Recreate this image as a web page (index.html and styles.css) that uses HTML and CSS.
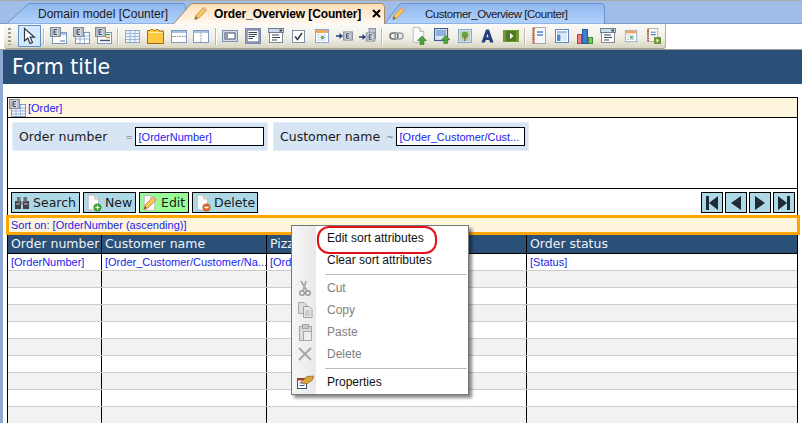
FILE: index.html
```html
<!DOCTYPE html>
<html lang="en">

<head>
  <meta charset="UTF-8">
  <title>Order_Overview [Counter]</title>
  <link rel="stylesheet" href="styles.css">
</head>

<body>
  <svg class="icon-defs" width="0" height="0">
    <defs>
      <symbol id="pencil" viewBox="0 0 16 16">
        <path d="M3 10 11.5 1.5 14.5 4.5 6 13 2 14.5Z" fill="#f6c65a" stroke="#b98a3c" stroke-width=".8"/>
        <path d="M11.5 1.5 14.5 4.5 13.2 5.8 10.2 2.8Z" fill="#e9a9a0"/>
        <path d="M2 14.5 3 11 5 13Z" fill="#6b5a45"/>
      </symbol>
      <symbol id="e-badge" viewBox="0 0 11 10">
        <rect x=".5" y=".5" width="10" height="9" fill="#b4bcc8" stroke="#858d9a"/>
        <rect x="3" y="1" width="5" height="8" fill="#d5dae2"/>
        <path d="M4 2.5H7M4 5H6.5M4 7.5H7M4 2.5V7.5" stroke="#3c4450" fill="none"/>
      </symbol>
      <symbol id="doc" viewBox="0 0 16 18">
        <path d="M2.5 .5H10L14.5 5V17.5H2.5Z" fill="#fbfbfb" stroke="#b5b5b5"/>
        <path d="M10 .5V5H14.5" fill="#e6e6e6" stroke="#b5b5b5"/>
      </symbol>
      <symbol id="up-arrow" viewBox="0 0 10 10">
        <path d="M5 1 9.5 5.5H7V9.5H3V5.5H.5Z" fill="#4ea33c" stroke="#2f7a26" stroke-width=".6"/>
      </symbol>
      <symbol id="notebook" viewBox="0 0 16 18">
        <rect x="2.5" y=".5" width="12" height="16" fill="#f6f6f4" stroke="#a9a9a9"/>
        <path d="M2.5 1V17" stroke="#b4552c" stroke-width="2.4" stroke-dasharray="1.4 .8"/>
        <path d="M6 5H12M6 8H12" stroke="#4f86d6" stroke-width="1.4"/>
      </symbol>
      <symbol id="calendar" viewBox="0 0 16 16">
        <rect x="1.5" y="1.5" width="13" height="13" fill="#fff" stroke="#8aa8d4"/>
        <rect x="2" y="2" width="12" height="3" fill="#f2a65a"/>
        <path d="M3.5 7H12.5M3.5 9.5H12.5M3.5 12H12.5" stroke="#9db6d8" stroke-dasharray="2 1"/>
        <rect x="7" y="8" width="3" height="3" fill="#63b35a"/>
      </symbol>
      <symbol id="dropdown" viewBox="0 0 16 16">
        <rect x="1.5" y="3.5" width="13" height="11" fill="#fff" stroke="#7f8790"/>
        <rect x=".5" y=".5" width="15" height="4" fill="#cdd9ea" stroke="#6f7f96"/>
        <rect x="11.5" y="1.5" width="2.5" height="2" fill="#39424e"/>
        <path d="M4 7H11M4 9.5H12M4 12H9" stroke="#3f4650" stroke-width="1.2"/>
      </symbol>
    </defs>
  </svg>

  <nav class="tab-strip">
    <div class="tab tab-domain">
      <svg class="tab-shape" width="180" height="21">
        <defs>
          <linearGradient id="tab-blue" x1="0" y1="0" x2="0" y2="1">
            <stop offset="0" stop-color="#8fb7f0"/>
            <stop offset="1" stop-color="#b3d3fb"/>
          </linearGradient>
        </defs>
        <path d="M.5 21 21 2Q22.5.5 24 .5H176Q179.5.5 179.5 4V21Z" fill="url(#tab-blue)" stroke="#6f93c8"/>
      </svg>
      <span class="tab-label">Domain model [Counter]</span>
    </div>
    <div class="tab tab-order">
      <svg class="tab-shape" width="212" height="21">
        <defs>
          <linearGradient id="tab-peach" x1="0" y1="0" x2="0" y2="1">
            <stop offset="0" stop-color="#ffdcb4"/>
            <stop offset="1" stop-color="#fff9f2"/>
          </linearGradient>
        </defs>
        <path d="M.5 21 17 2Q18.5.5 20 .5H208Q211.5.5 211.5 4V21" fill="url(#tab-peach)" stroke="#a98a62"/>
      </svg>
      <svg class="tab-pencil" width="15" height="15"><use href="#pencil"/></svg>
      <span class="tab-label">Order_Overview [Counter]</span>
      <svg class="tab-close" width="9" height="9" viewBox="0 0 9 9"><path d="M1 1 8 8M8 1 1 8" stroke="#000" stroke-width="2"/></svg>
    </div>
    <div class="tab tab-customer">
      <svg class="tab-shape" width="221" height="21">
        <path d="M.5 21 15 2Q16.5.5 18 .5H217Q220.5.5 220.5 4V21Z" fill="url(#tab-blue)" stroke="#6f93c8"/>
      </svg>
      <svg class="tab-pencil" width="15" height="15"><use href="#pencil"/></svg>
      <span class="tab-label">Customer_Overview [Counter]</span>
    </div>
  </nav>

  <div class="toolbar-row">
    <div class="toolbar">
      <span class="grip"></span>
      <span class="tool tool-active">
        <svg width="16" height="18" viewBox="0 0 16 18"><path d="M3.5 1.5V14L6.8 11 9 16.5 11.5 15.5 9.2 10.2H13.5Z" fill="#fff" stroke="#2f3a48" stroke-width="1.2"/></svg>
      </span>
      <span class="tool-sep"></span>

      <span class="tool"><svg width="17" height="18" viewBox="0 0 17 18"><rect x="2.5" y="5.5" width="14" height="11" fill="#fff" stroke="#7e99bf"/><rect x="3" y="6" width="13" height="2" fill="#a9c2e3"/><path d="M10 14H15" stroke="#8da0b8" stroke-width="1.5"/><use href="#e-badge" width="11" height="10"/></svg></span>
      <span class="tool"><svg width="17" height="18" viewBox="0 0 17 18"><rect x="2.5" y="5.5" width="14" height="11" fill="#fff" stroke="#7e99bf"/><path d="M3 9H16M3 12H16M7 6V16M11.5 6V16" stroke="#9db6d8"/><use href="#e-badge" width="11" height="10"/></svg></span>
      <span class="tool"><svg width="17" height="18" viewBox="0 0 17 18"><rect x="2.5" y="5.5" width="14" height="11" fill="#fff" stroke="#7e99bf"/><path d="M11 7.5H15" stroke="#4ea33c" stroke-width="1.5"/><path d="M11 10.5H15" stroke="#d98c2e" stroke-width="1.5"/><path d="M5 13.5H15" stroke="#46566c" stroke-width="1.5"/><use href="#e-badge" width="11" height="10"/></svg></span>
      <span class="tool-sep"></span>

      <span class="tool"><svg width="15" height="13" viewBox="0 0 15 13"><rect x=".5" y=".5" width="14" height="12" fill="#f0f5fc" stroke="#8aa8d4"/><path d="M1 3.5H14M1 6.5H14M1 9.5H14M5 1V12M10 1V12" stroke="#9db6d8"/></svg></span>
      <span class="tool"><svg width="17" height="15" viewBox="0 0 17 15"><path d="M.5 14.5V1.5H3L3.8.5H6L7 1.5H8L9 .5H11L12 2H16.5V14.5Z" fill="#fdc93f" stroke="#9b6a14"/><path d="M1.5 3.5H15.5" stroke="#fff0b0"/></svg></span>
      <span class="tool"><svg width="16" height="13" viewBox="0 0 16 13"><rect x=".5" y=".5" width="15" height="12" fill="#fff" stroke="#7e99bf"/><rect x="1" y="1" width="14" height="2" fill="#a9c2e3"/><path d="M1 6.5H15" stroke="#8a8f96" stroke-dasharray="1.5 1"/></svg></span>
      <span class="tool"><svg width="16" height="13" viewBox="0 0 16 13"><rect x=".5" y=".5" width="15" height="12" fill="#fff" stroke="#7e99bf"/><rect x="1" y="1" width="14" height="2" fill="#a9c2e3"/><path d="M8 3V12" stroke="#8a8f96" stroke-dasharray="1.5 1"/></svg></span>
      <span class="tool-sep"></span>

      <span class="tool"><svg width="16" height="12" viewBox="0 0 16 12"><rect x=".5" y=".5" width="15" height="11" fill="#d5dcea" stroke="#7e8fa8"/><rect x="3" y="3" width="10" height="6" fill="#fff" stroke="#3e4c66"/><path d="M5 4V8" stroke="#28303c"/></svg></span>
      <span class="tool"><svg width="16" height="16" viewBox="0 0 16 16"><rect x=".5" y=".5" width="15" height="15" fill="#c9cfe8" stroke="#7b87ad"/><rect x="2" y="2" width="12" height="12" fill="#fff" stroke="#4f5a78"/><path d="M3.5 4.5H12M3.5 6.5H12M3.5 8.5H10M3.5 10.5H8" stroke="#39424e" stroke-width="1.1"/></svg></span>
      <span class="tool"><svg width="16" height="16"><use href="#dropdown"/></svg></span>
      <span class="tool"><svg width="13" height="13" viewBox="0 0 13 13"><rect x=".5" y=".5" width="12" height="12" fill="#fff" stroke="#7f8fa8" stroke-width="1"/><path d="M3 6.5 5.5 9.5 10 3" stroke="#2d3a4c" stroke-width="1.5" fill="none"/></svg></span>
      <span class="tool"><svg width="16" height="16"><use href="#calendar"/></svg></span>
      <span class="tool"><svg width="17" height="14" viewBox="0 0 17 14"><path d="M0 7H4" stroke="#263a78" stroke-width="1.5"/><path d="M3.5 4 7 7 3.5 10Z" fill="#263a78"/><use href="#e-badge" x="7" y="1" width="10" height="12"/></svg></span>
      <span class="tool"><svg width="17" height="16" viewBox="0 0 17 16"><path d="M0 9H4" stroke="#263a78" stroke-width="1.5"/><path d="M3.5 6 7 9 3.5 12Z" fill="#263a78"/><rect x="10" y=".5" width="6.5" height="10" fill="#bcc6d4" stroke="#8b93a0"/><use href="#e-badge" x="6.5" y="3" width="10" height="12"/></svg></span>
      <span class="tool-sep"></span>

      <span class="tool"><svg width="15" height="8" viewBox="0 0 15 8"><rect x="1" y="1" width="8" height="6" rx="3" fill="none" stroke="#6d7278" stroke-width="1.6"/><rect x="6" y="1" width="8" height="6" rx="3" fill="none" stroke="#9a9fa5" stroke-width="1.6"/></svg></span>
      <span class="tool"><svg width="16" height="18" viewBox="0 0 16 18"><use href="#doc" width="14" height="16"/><use href="#up-arrow" x="6" y="8" width="10" height="10"/></svg></span>
      <span class="tool"><svg width="16" height="16" viewBox="0 0 16 16"><rect x=".5" y=".5" width="13" height="12" fill="#dbe7f6" stroke="#3d5f96" stroke-width="1.2"/><rect x="2" y="2" width="10" height="6" fill="#8fb0d8"/><use href="#up-arrow" x="7" y="6.5" width="9.5" height="9.5"/></svg></span>
      <span class="tool"><svg width="14" height="14" viewBox="0 0 14 14"><rect x=".5" y=".5" width="13" height="13" fill="#cfe0f2" stroke="#8aa8d4"/><rect x="2" y="2" width="10" height="10" fill="#b9d6a8"/><circle cx="7" cy="6" r="3.2" fill="#6f9e3e"/><path d="M7 8V12" stroke="#8a6a3a" stroke-width="1.4"/></svg></span>
      <span class="tool"><svg width="13" height="14" viewBox="0 0 13 14"><path d="M.5 13.5 5 .5H8L12.5 13.5H9L8.3 11H4.7L4 13.5ZM5.5 8.2H7.5L6.5 4.5Z" fill="#263f7c"/></svg></span>
      <span class="tool"><svg width="16" height="12" viewBox="0 0 16 12"><rect width="16" height="12" fill="#6f9a35"/><rect x="3" y="1" width="10" height="10" fill="#4f7a22"/><path d="M7 3 10.5 6 7 9Z" fill="#fff"/></svg></span>
      <span class="tool-sep"></span>

      <span class="tool"><svg width="16" height="18"><use href="#notebook"/></svg></span>
      <span class="tool"><svg width="14" height="14" viewBox="0 0 14 14"><rect x=".5" y=".5" width="13" height="13" fill="#fff" stroke="#5a86c4"/><rect x="2" y="2" width="10" height="2.5" fill="#a9c2e3"/><rect x="2" y="5.5" width="3.5" height="6.5" fill="#4f86d6"/><rect x="6.5" y="5.5" width="5.5" height="6.5" fill="#dce7f5"/></svg></span>
      <span class="tool"><svg width="16" height="15" viewBox="0 0 16 15"><rect x=".5" y="5.5" width="4" height="9" fill="#f2798a" stroke="#c0394e"/><rect x="5.5" y=".5" width="5" height="14" fill="#3d7fd0" stroke="#23589c"/><rect x="11.5" y="8.5" width="4" height="6" fill="#7cc267" stroke="#468f35"/></svg></span>
      <span class="tool"><svg width="16" height="16"><use href="#dropdown"/></svg></span>
      <span class="tool"><svg width="14" height="14"><use href="#calendar" width="14" height="14"/></svg></span>
      <span class="tool"><svg width="15" height="16" viewBox="0 0 15 16"><use href="#notebook" width="13" height="15"/><rect x="8" y="9" width="7" height="7" fill="#6f9a35"/><path d="M10.5 10.5 13 12.5 10.5 14.5Z" fill="#fff"/></svg></span>
    </div>
  </div>

  <main class="workspace">
    <h1 class="form-title">Form title</h1>

    <section class="form-frame">
      <div class="view-head">
        <svg width="17" height="18" viewBox="0 0 17 18"><rect x="2.5" y="5.5" width="14" height="12" fill="#f0f5fc" stroke="#7e99bf"/><path d="M3 9H16M3 12H16M3 15H16M7 6V17M11.5 6V17" stroke="#9db6d8"/><use href="#e-badge" width="11" height="10"/></svg>
        <span class="attr">[Order]</span>
      </div>

      <div class="search-fields">
        <div class="field-group">
          <span class="field-label">Order number</span>
          <span class="field-op">=</span>
          <span class="field-input attr">[OrderNumber]</span>
        </div>
        <div class="field-group">
          <span class="field-label">Customer name</span>
          <span class="field-op">~</span>
          <span class="field-input attr">[Order_Customer/Cust...</span>
        </div>
      </div>

      <div class="control-bar">
        <button class="btn btn-search">
          <svg width="16" height="15" viewBox="0 0 16 15"><rect x="1" y="6" width="6" height="8" fill="#3d4349"/><rect x="9" y="6" width="6" height="8" fill="#3d4349"/><rect x="3" y="2" width="3.5" height="5" fill="#6c737a"/><rect x="9.5" y="2" width="3.5" height="5" fill="#6c737a"/><rect x="7" y="6" width="2" height="4" fill="#9aa0a6"/><path d="M2 9H6M10 9H14" stroke="#c6cbd0"/></svg>
          Search
        </button>
        <button class="btn btn-new">
          <svg width="16" height="18" viewBox="0 0 16 18"><use href="#doc" width="14" height="17"/><circle cx="11.5" cy="13.5" r="3.7" fill="#4ea33c" stroke="#2f7a26" stroke-width=".6"/><path d="M9.5 13.5H13.5M11.5 11.5V15.5" stroke="#fff"/></svg>
          New
        </button>
        <button class="btn btn-edit">
          <svg width="16" height="16"><use href="#doc" width="14" height="16"/><use href="#pencil"/></svg>
          Edit
        </button>
        <button class="btn btn-delete">
          <svg width="16" height="18" viewBox="0 0 16 18"><use href="#doc" width="14" height="17"/><circle cx="11.5" cy="13.5" r="3.7" fill="#e2702c" stroke="#b04a12" stroke-width=".6"/><path d="M9.5 13.5H13.5" stroke="#fff" stroke-width="1.4"/></svg>
          Delete
        </button>
        <div class="paging">
          <button class="btn-page"><svg width="14" height="16" viewBox="0 0 14 16"><path d="M1 1H4V15H1ZM13 1V15L4 8Z" fill="#1f2a36"/></svg></button>
          <button class="btn-page"><svg width="12" height="16" viewBox="0 0 12 16"><path d="M11 1V15L1 8Z" fill="#1f2a36"/></svg></button>
          <button class="btn-page"><svg width="12" height="16" viewBox="0 0 12 16"><path d="M1 1V15L11 8Z" fill="#1f2a36"/></svg></button>
          <button class="btn-page"><svg width="14" height="16" viewBox="0 0 14 16"><path d="M1 1V15L10 8ZM10 1H13V15H10Z" fill="#1f2a36"/></svg></button>
        </div>
      </div>

      <div class="sort-bar attr">Sort on: [OrderNumber (ascending)]</div>

      <div class="grid-row grid-head">
        <div class="cell">Order number</div>
        <div class="cell">Customer name</div>
        <div class="cell">Pizz</div>
        <div class="cell">Order status</div>
      </div>
      <div class="grid-row">
        <div class="cell attr">[OrderNumber]</div>
        <div class="cell attr">[Order_Customer/Customer/Na...</div>
        <div class="cell attr">[Ord</div>
        <div class="cell attr">[Status]</div>
      </div>
      <div class="grid-row"><div class="cell"></div><div class="cell"></div><div class="cell"></div><div class="cell"></div></div>
      <div class="grid-row"><div class="cell"></div><div class="cell"></div><div class="cell"></div><div class="cell"></div></div>
      <div class="grid-row"><div class="cell"></div><div class="cell"></div><div class="cell"></div><div class="cell"></div></div>
      <div class="grid-row"><div class="cell"></div><div class="cell"></div><div class="cell"></div><div class="cell"></div></div>
      <div class="grid-row"><div class="cell"></div><div class="cell"></div><div class="cell"></div><div class="cell"></div></div>
      <div class="grid-row"><div class="cell"></div><div class="cell"></div><div class="cell"></div><div class="cell"></div></div>
      <div class="grid-row"><div class="cell"></div><div class="cell"></div><div class="cell"></div><div class="cell"></div></div>
      <div class="grid-row"><div class="cell"></div><div class="cell"></div><div class="cell"></div><div class="cell"></div></div>
      <div class="grid-row"><div class="cell"></div><div class="cell"></div><div class="cell"></div><div class="cell"></div></div>
    </section>
  </main>

  <!-- context menu -->
  <ul class="context-menu">
    <li class="menu-item menu-marked"><span class="menu-icon"></span>Edit sort attributes</li>
    <li class="menu-item"><span class="menu-icon"></span>Clear sort attributes</li>
    <li class="menu-sep"></li>
    <li class="menu-item menu-disabled">
      <span class="menu-icon"><svg width="16" height="17" viewBox="0 0 16 17"><path d="M4 1 10 11M9 1 6 11" stroke="#a8a8a8" stroke-width="1.8"/><circle cx="5" cy="13" r="2.3" fill="none" stroke="#9a9a9a" stroke-width="1.5"/><circle cx="11" cy="13" r="2.3" fill="none" stroke="#9a9a9a" stroke-width="1.5"/></svg></span>Cut
    </li>
    <li class="menu-item menu-disabled">
      <span class="menu-icon"><svg width="16" height="16" viewBox="0 0 16 16"><path d="M1.5.5H7L9.5 3V11.5H1.5Z" fill="#dedede" stroke="#a8a8a8"/><path d="M6.5 4.5H12L15 7.5V15.5H6.5Z" fill="#e8e8e8" stroke="#a0a0a0"/><path d="M8 9H13M8 11H13M8 13H13" stroke="#b0b0b0"/></svg></span>Copy
    </li>
    <li class="menu-item menu-disabled">
      <span class="menu-icon"><svg width="16" height="17" viewBox="0 0 16 17"><rect x="2.5" y="2.5" width="12" height="14" fill="#dcdcdc" stroke="#a4a4a4"/><rect x="5.5" y=".5" width="6" height="4" fill="#c8c8c8" stroke="#a4a4a4"/><rect x="6.5" y="7.5" width="8" height="9" fill="#efefef" stroke="#a8a8a8"/></svg></span>Paste
    </li>
    <li class="menu-item menu-disabled">
      <span class="menu-icon"><svg width="14" height="14" viewBox="0 0 14 14"><path d="M1 1 13 13M13 1 1 13" stroke="#a8a8a8" stroke-width="2"/></svg></span>Delete
    </li>
    <li class="menu-sep"></li>
    <li class="menu-item">
      <span class="menu-icon"><svg width="17" height="14" viewBox="0 0 17 14"><rect x=".5" y="3.5" width="9" height="10" fill="#fff" stroke="#3f4f72"/><path d="M1 4.5H9" stroke="#c8342c" stroke-width="2"/><path d="M2.5 8H7.5M2.5 10.5H7.5" stroke="#3f5fa8"/><path d="M4 7 10 1.5 16.5 1 15.5 5 10.5 8.5 7 9Z" fill="#d9a635" stroke="#8b6418" stroke-width=".7"/></svg></span>Properties
    </li>
  </ul>
</body>

</html>
```

FILE: styles.css
```css
* {
  box-sizing: border-box;
}

body {
  margin: 0;
  width: 802px;
  height: 423px;
  overflow: hidden;
  position: relative;
  background-color: #fff;
  font-family: "DejaVu Sans", sans-serif;
  color: #1a1a1a;
}

svg {
  flex: none;
}

.icon-defs {
  display: block;
}

/* Tabs */
.tab-strip {
  display: flex;
  height: 24px;
  padding: 2px 0 0 6px;
  background-color: #9fbde6;
  border-top: 1px solid #a9a9a9;
  border-bottom: 1px solid #7f9dc9;
  font-family: "Liberation Sans", sans-serif;
  font-size: 12px;
}

.tab {
  position: relative;
  display: flex;
  align-items: center;
  height: 21px;
}

.tab-shape {
  position: absolute;
  left: 0;
  top: 0;
}

.tab-label,
.tab-pencil,
.tab-close {
  position: relative;
}

.tab-domain {
  width: 180px;
  padding-left: 32px;
}

.tab-order {
  width: 212px;
  margin-left: -13px;
  padding-left: 20px;
  z-index: 2;
  font-weight: bold;
}

.tab-order .tab-label {
  margin-left: 6px;
  color: #000;
  letter-spacing: -0.12px;
}

.tab-close {
  margin-left: 11px;
}

.tab-customer {
  width: 221px;
  margin-left: -1px;
  padding-left: 7px;
}

.tab-customer .tab-label {
  margin-left: 19px;
  font-size: 11.5px;
  letter-spacing: -0.45px;
}

/* Toolbar */
.toolbar-row {
  height: 26px;
  border-bottom: 1px solid #9c9c9c;
  padding-left: 4px;
}

.toolbar {
  display: flex;
  align-items: center;
  width: 662px;
  height: 25px;
  background: linear-gradient(#fbfaf6, #f0eee4 60%, #d8d5c2);
  border-bottom: 1px solid #a9a68f;
  border-right: 1px solid #b5b29c;
  border-radius: 3px 0 3px 3px;
}

.grip {
  width: 3px;
  height: 17px;
  margin: 0 7px 0 4px;
  background: repeating-linear-gradient(#9a9a90 0 2px, transparent 2px 4px);
}

.tool {
  display: flex;
  align-items: center;
  justify-content: center;
  width: 23px;
  height: 22px;
}

.tool-active {
  background-color: #d6e8fc;
  border: 1px solid #5d90d0;
}

.tool-sep {
  width: 2px;
  height: 17px;
  margin: 0 2px;
  border-left: 1px solid #bdbaa8;
  border-right: 1px solid #fff;
}

/* Page */
.workspace {
  border-left: 3px solid #8ea9d2;
  height: 373px;
}

.form-title {
  margin: 0;
  height: 34px;
  padding-left: 9px;
  background-color: #2a5078;
  color: #fff;
  font-size: 20.5px;
  font-weight: normal;
  line-height: 34px;
}

.form-frame {
  width: 791px;
  margin: 13px 0 0 4px;
  border: 1px solid #000;
  border-bottom: 0;
}

.attr {
  color: #1c1cf0;
  font-family: "Liberation Sans", sans-serif;
  font-size: 11px;
}

.view-head {
  display: flex;
  align-items: center;
  gap: 2px;
  height: 20px;
  padding-left: 1px;
  background-color: #fdf5dc;
  border-bottom: 1px solid #000;
}

.search-fields {
  display: flex;
  gap: 5px;
  height: 71px;
  padding: 4px 0 0 4px;
  border-bottom: 1px solid #000;
}

.field-group {
  display: flex;
  align-items: center;
  width: 256px;
  height: 29px;
  padding: 0 3px 0 6px;
  background-color: #d6e4f3;
  border: 1px solid #e6eef8;
}

.field-label {
  width: 107px;
  font-size: 12.5px;
}

.field-op {
  width: 9px;
  font-size: 8.5px;
  color: #666;
}

.field-input {
  display: flex;
  align-items: center;
  width: 130px;
  height: 19px;
  padding-left: 3px;
  background-color: #fff;
  border: 1px solid #000;
  white-space: nowrap;
  overflow: hidden;
}

/* Buttons */
.control-bar {
  display: flex;
  gap: 3px;
  height: 26px;
  padding: 3px 2px 0 3px;
}

.btn {
  display: flex;
  align-items: center;
  gap: 3px;
  height: 21px;
  padding: 0 3px 0 2px;
  background-color: #add8e6;
  border: 1px solid #000;
  font-family: "DejaVu Sans", sans-serif;
  font-size: 12.5px;
  color: #1a1a1a;
}

.btn-search { width: 69px; }
.btn-new { width: 53px; }
.btn-edit { width: 50px; background-color: #98fb98; }
.btn-delete { width: 66px; }

.paging {
  display: flex;
  gap: 2px;
  margin-left: auto;
}

.btn-page {
  display: flex;
  align-items: center;
  justify-content: center;
  width: 22px;
  height: 21px;
  padding: 0;
  background-color: #add8e6;
  border: 1px solid #000;
}

.sort-bar {
  display: flex;
  align-items: center;
  width: 794px;
  height: 20px;
  margin-left: -2px;
  padding-left: 2px;
  background-color: #fdf5dc;
  border: 3px solid #ffa500;
}

/* Data grid */
.grid-row {
  display: grid;
  grid-template-columns: 94px 165px 260px 1fr;
  height: 17px;
  border-bottom: 1px solid #ccc;
}

.grid-row:nth-child(odd) {
  background-color: #f2f2f2;
}

.grid-row .cell {
  display: flex;
  align-items: center;
  padding-left: 3px;
  border-right: 1px solid #000;
  white-space: nowrap;
  overflow: hidden;
}

.grid-row .cell:last-child {
  border-right: 0;
}

.grid-row.grid-head {
  height: 19px;
  background-color: #2a5078;
  border-bottom: 1px solid #000;
  color: #eef2f6;
  font-size: 12.5px;
}

.grid-head .cell {
  padding-bottom: 2px;
}

/* Context menu */
.context-menu {
  position: absolute;
  left: 291px;
  top: 225px;
  width: 178px;
  height: 170px;
  margin: 0;
  padding: 1px;
  list-style: none;
  background: linear-gradient(90deg, #f6f6f6, #e9e9e9 24px, #fff 24px);
  border: 1px solid #777;
  box-shadow: 3px 3px 3px rgba(0, 0, 0, 0.45);
  font-family: "Liberation Sans", sans-serif;
  font-size: 12px;
  color: #111;
}

.menu-item {
  position: relative;
  display: flex;
  align-items: center;
  height: 22px;
}

.menu-icon {
  display: flex;
  align-items: center;
  justify-content: center;
  width: 24px;
  margin-right: 10px;
}

.menu-disabled {
  color: #808080;
}

.menu-marked::after {
  content: "";
  position: absolute;
  left: 24px;
  top: -1px;
  width: 116px;
  height: 24px;
  border: 2px solid #e3101a;
  border-radius: 12px;
}

.menu-sep {
  height: 6px;
  margin-left: 32px;
  background: linear-gradient(#bbb, #bbb) center / 100% 1px no-repeat;
}
```
